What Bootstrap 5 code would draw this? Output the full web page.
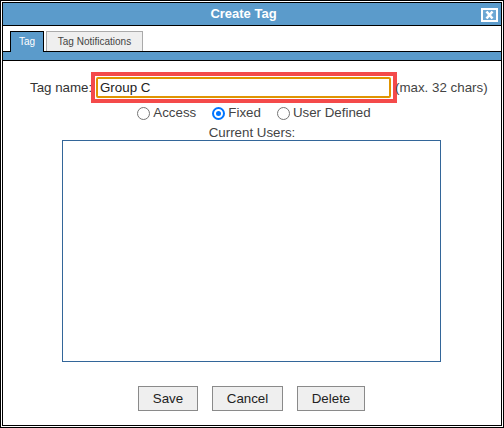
<!DOCTYPE html>
<html lang="en">
<head>
<meta charset="utf-8">
<title>Create Tag</title>
<link href="https://cdn.jsdelivr.net/npm/bootstrap@5.3.0/dist/css/bootstrap.min.css" rel="stylesheet">
<style>
html,body{height:428px;overflow:hidden;background:#fff}
body{font-family:"Liberation Sans",Arial,sans-serif;font-size:13.33px;color:#333;line-height:16px}
.dlg-frame{width:504px;height:428px;border:1px solid #000;padding:1px;background:#fff}
.dlg-inner{height:100%;border:1px solid #000;background:#fff}
.dlg-title{height:23px;flex:none;background:#5b9bcb;color:#fff;font-weight:700;font-size:13px;border-bottom:1px solid #000;position:relative;padding-right:17px}
.dlg-close{position:absolute;right:3px;top:5px;width:17px;height:14px;border:2px solid #fff;background:#6ea8d4}
.dlg-close svg{display:block;width:100%;height:100%}
.tab-strip{height:26px;flex:none;padding:5px 0 0 7px;gap:2px;border-bottom:1px solid #000}
.tab-one{font-size:10px;line-height:20px;height:20px;border-radius:0}
.tab-on{background:#5b9bcb;color:#fff;border:1px solid #000;border-bottom:0;width:34px;padding:0;text-align:center;height:21px}
.tab-off{background:#efefef;color:#444;border:1px solid #aaa;border-bottom:0;width:97px;padding:0;text-align:center}
.tab-band{height:9px;flex:none;background:#5b9bcb;border-bottom:1px solid #000}
.dlg-body{padding-top:11px}
.name-row{height:31px;padding-left:27px}
.name-lab{width:61px;white-space:nowrap;margin:0}
.hl-box{width:306px;height:31px;flex:none;border:4px solid #f44a4a;padding:1px 2px 1px 1px;margin-right:-2px}
.name-input{width:100%;height:21px;border:2px solid #e09400;border-radius:2px;padding:0 2px;font:13.33px "Liberation Sans",Arial,sans-serif;color:#222;outline:0;display:block}
.name-hint{white-space:nowrap;color:#444}
.radio-row{height:20px;gap:16px;padding-left:4px}
.radio-item{gap:3px;color:#444}
.radio-dot{width:13px;height:13px;border-radius:50%;border:1px solid #767676;background:#fff;flex:none}
.radio-sel{border:2px solid #0075ff;padding:2px;background:#0075ff content-box}
.cur-lab{height:15px;margin-top:2px;color:#444;line-height:16px;text-align:center}
.user-box{width:379px;height:222px;border:1px solid #369;margin:0 0 0 59px}
.btn-row{margin-top:24px;gap:14px;padding-right:1px}
.act-btn{height:25px;background:#efefef;border:1px solid #8a8a8a;border-radius:0;color:#222;font-size:13.33px;line-height:23px;padding:0;text-align:center}
.w-save{width:60px}.w-cancel{width:71px}.w-delete{width:68px}
</style>
</head>
<body>
<div class="dlg-frame">
  <div class="dlg-inner d-flex flex-column">
    <div class="dlg-title d-flex align-items-center justify-content-center">Create Tag
      <span class="dlg-close"><svg viewBox="0 0 13 10"><path d="M3.5 1.5 9.5 8.5M9.5 1.5 3.5 8.5" stroke="#fff" stroke-width="2.6" fill="none"/></svg></span>
    </div>
    <div class="tab-strip d-flex align-items-start">
      <div class="tab-one tab-on">Tag</div>
      <div class="tab-one tab-off">Tag Notifications</div>
    </div>
    <div class="tab-band"></div>
    <div class="dlg-body">
      <div class="name-row d-flex align-items-center">
        <label class="name-lab" for="tagname">Tag name:</label>
        <div class="hl-box"><input id="tagname" class="name-input" value="Group C"></div>
        <span class="name-hint">(max. 32 chars)</span>
      </div>
      <div class="radio-row d-flex justify-content-center align-items-center">
        <span class="radio-item d-flex align-items-center"><span class="radio-dot"></span>Access</span>
        <span class="radio-item d-flex align-items-center"><span class="radio-dot radio-sel"></span>Fixed</span>
        <span class="radio-item d-flex align-items-center"><span class="radio-dot"></span>User Defined</span>
      </div>
      <div class="cur-lab">Current Users:</div>
      <div class="user-box"></div>
      <div class="btn-row d-flex justify-content-center">
        <button type="button" class="act-btn w-save">Save</button>
        <button type="button" class="act-btn w-cancel">Cancel</button>
        <button type="button" class="act-btn w-delete">Delete</button>
      </div>
    </div>
  </div>
</div>
<script src="https://cdn.jsdelivr.net/npm/bootstrap@5.3.0/dist/js/bootstrap.bundle.min.js"></script>
</body>
</html>
